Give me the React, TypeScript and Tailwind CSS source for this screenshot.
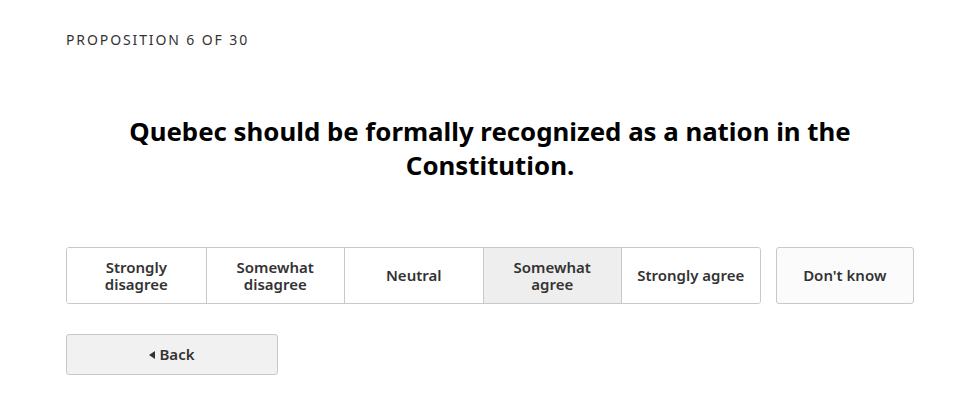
export default function App() {
  const opts = [
    ["Strongly", "disagree"],
    ["Somewhat", "disagree"],
    ["Neutral"],
    ["Somewhat", "agree"],
    ["Strongly agree"],
  ];
  return (
    <div
      className="w-[980px] h-[400px] bg-white text-[#222]"
      style={{ fontFamily: '"Noto Sans", "Open Sans", sans-serif' }}
    >
      <div className="px-[66px] pt-[30px]">
        <div className="text-[14px] leading-[19px] tracking-[0.135em] text-[#333]">
          PROPOSITION 6 OF 30
        </div>
        <h1 className="mt-[65px] text-center text-[25.8px] leading-[34px] font-bold text-black px-[40px]">
          Quebec should be formally recognized as a nation in the Constitution.
        </h1>
        <div className="mt-[65px] flex gap-[15px]">
          <div className="flex border border-[#c8c8c8] rounded-[3px] overflow-hidden">
            {opts.map((o, i) => (
              <button
                key={i}
                className={`w-[139px] h-[55px] flex flex-col items-center justify-center text-[15px] leading-[17px] font-semibold text-[#333] ${
                  i > 0 ? "border-l border-[#c8c8c8]" : ""
                } ${i === 3 ? "bg-[#eeeeee] text-[#111]" : "bg-white"}`}
              >
                {o.map((t, j) => (
                  <span key={j} className="block">{t}</span>
                ))}
              </button>
            ))}
          </div>
          <button className="w-[139px] h-[57px] border border-[#c8c8c8] rounded-[3px] bg-[#fbfbfb] text-[15px] font-semibold text-[#333]">
            Don't know
          </button>
        </div>
        <button className="mt-[30px] w-[212px] h-[41px] border border-[#c8c8c8] rounded-[3px] bg-[#f1f1f1] flex items-center justify-center gap-[4px] text-[15px] font-semibold text-[#333]">
          <svg width="6" height="8" viewBox="0 0 6 8">
            <path d="M6 0 L0 4 L6 8 Z" fill="#333" />
          </svg>
          Back
        </button>
      </div>
    </div>
  );
}
